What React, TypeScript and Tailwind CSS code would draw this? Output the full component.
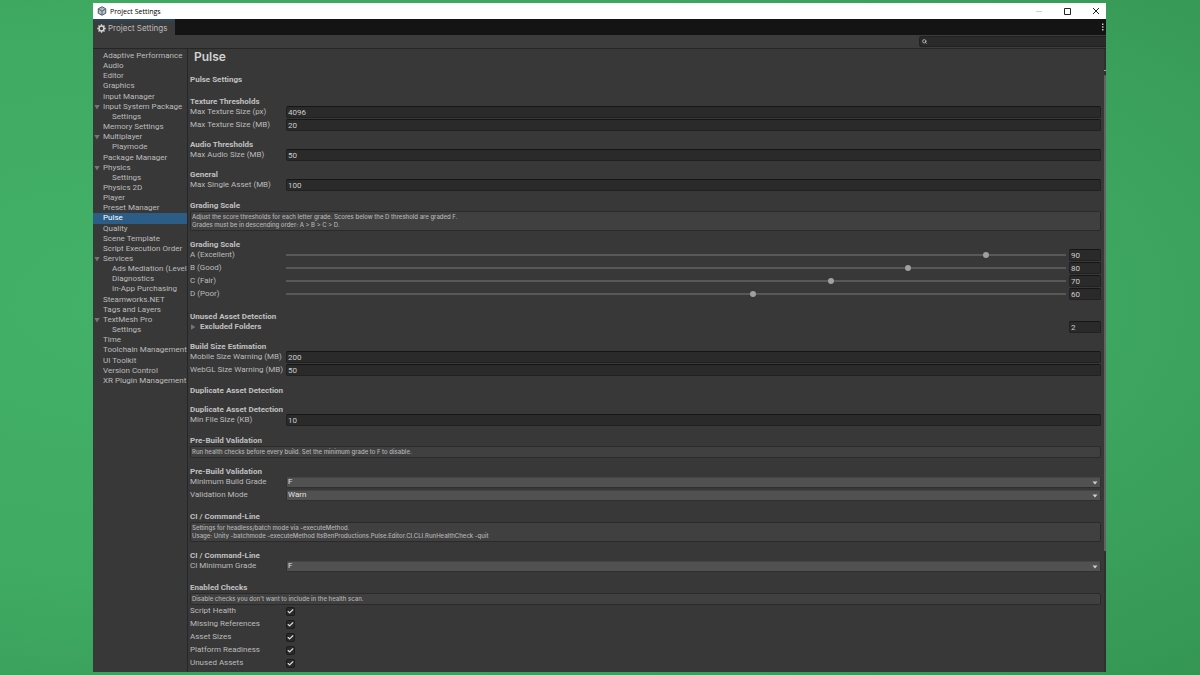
import React from 'react';
import { Check, Search } from 'lucide-react';

const categories = [
  { name: 'Adaptive Performance' },
  { name: 'Audio' },
  { name: 'Editor' },
  { name: 'Graphics' },
  { name: 'Input Manager' },
  { name: 'Input System Package', open: true },
  { name: 'Settings', child: true },
  { name: 'Memory Settings' },
  { name: 'Multiplayer', open: true },
  { name: 'Playmode', child: true },
  { name: 'Package Manager' },
  { name: 'Physics', open: true },
  { name: 'Settings', child: true },
  { name: 'Physics 2D' },
  { name: 'Player' },
  { name: 'Preset Manager' },
  { name: 'Pulse', selected: true },
  { name: 'Quality' },
  { name: 'Scene Template' },
  { name: 'Script Execution Order' },
  { name: 'Services', open: true },
  { name: 'Ads Mediation (LevelPlay)', child: true },
  { name: 'Diagnostics', child: true },
  { name: 'In-App Purchasing', child: true },
  { name: 'Steamworks.NET' },
  { name: 'Tags and Layers' },
  { name: 'TextMesh Pro', open: true },
  { name: 'Settings', child: true },
  { name: 'Time' },
  { name: 'Toolchain Management' },
  { name: 'UI Toolkit' },
  { name: 'Version Control' },
  { name: 'XR Plugin Management' },
];

const grades = [
  { label: 'A (Excellent)', value: 90 },
  { label: 'B (Good)', value: 80 },
  { label: 'C (Fair)', value: 70 },
  { label: 'D (Poor)', value: 60 },
];

const checks = [
  'Script Health',
  'Missing References',
  'Asset Sizes',
  'Platform Readiness',
  'Unused Assets',
  'Build Size Estimation',
];

const toId = (label: string) => label.toLowerCase().replace(/[^a-z0-9]+/g, '-');

const inputClass =
  'h-3 min-w-0 rounded-[2px] border border-[#212121] border-t-[#161616] bg-[#2a2a2a] px-px text-[8px] leading-none text-[#cccccc] outline-none';

const Heading = ({ children }: { children: React.ReactNode }) => (
  <h2 className="h-[11px] text-[8px] leading-[13px] font-bold whitespace-nowrap text-[#c0c0c0]">{children}</h2>
);

const HelpBox = ({ lines }: { lines: string[] }) => (
  <div className="mt-px rounded-[2px] border border-[#2a2a2a] bg-[#404040] px-px py-px font-['Inter',sans-serif] text-[6px] leading-[8px] font-medium text-[#b4b4b4]">
    {lines.map((line) => (
      <p key={line}>{line}</p>
    ))}
  </div>
);

const Row = ({ label, children }: { label: string; children: React.ReactNode }) => (
  <div className="flex h-3 items-center">
    <label htmlFor={toId(label)} className="w-24 shrink-0 text-[8px] leading-3 whitespace-nowrap">
      {label}
    </label>
    {children}
  </div>
);

const NumberField = ({ label, value }: { label: string; value: number }) => (
  <Row label={label}>
    <input id={toId(label)} type="text" defaultValue={value} className={`${inputClass} flex-1`} />
  </Row>
);

const SliderField = ({ label, value }: { label: string; value: number }) => (
  <Row label={label}>
    <input
      id={toId(label)}
      type="range"
      min={0}
      max={100}
      defaultValue={value}
      className="h-3 min-w-0 flex-1 appearance-none bg-transparent [&::-webkit-slider-runnable-track]:h-[2px] [&::-webkit-slider-runnable-track]:bg-[#585858] [&::-webkit-slider-thumb]:-mt-[2px] [&::-webkit-slider-thumb]:size-[6px] [&::-webkit-slider-thumb]:appearance-none [&::-webkit-slider-thumb]:rounded-full [&::-webkit-slider-thumb]:bg-[#a0a0a0]"
    />
    <input type="text" aria-label={`${label} value`} defaultValue={value} className={`${inputClass} ml-[3px] w-8`} />
  </Row>
);

const SelectField = ({ label, value, options }: { label: string; value: string; options: string[] }) => (
  <Row label={label}>
    <div className="relative h-[11px] flex-1">
      <select
        id={toId(label)}
        defaultValue={value}
        className="block h-full w-full appearance-none rounded-[2px] border border-[#303030] border-t-[#454545] bg-[#515151] px-px text-[8px] leading-none text-[#e0e0e0] outline-none"
      >
        {options.map((option) => (
          <option key={option}>{option}</option>
        ))}
      </select>
      <svg viewBox="0 0 6 4" className="pointer-events-none absolute top-1 right-[3px] h-1 w-[6px] fill-[#d0d0d0]">
        <path d="M0.5 0.5h5L3 3.5z" />
      </svg>
    </div>
  </Row>
);

const UnityIcon = () => (
  <svg viewBox="0 0 20 20" className="size-[10px] fill-none stroke-[#4a5866]">
    <path d="M10 1.5l7.5 4v9l-7.500 4-7.500-4v-9z" fill="#b9c4cd" strokeWidth="2" strokeLinejoin="round" />
    <path d="M10 10.500v7M10 10.500L3.500 6.500M10 10.500l6.500-4" strokeWidth="1.800" />
    <path d="M10 5.500l-3 1.500 3 2 3-2z" fill="#ffffff" strokeWidth="1" />
  </svg>
);

const GearIcon = () => (
  <svg viewBox="0 0 16 16" className="mr-[2px] size-[9px] fill-none stroke-[#d6d6d6]">
    <circle cx="8" cy="8" r="4.300" strokeWidth="2.600" />
    <path
      d="M8 0.500v3M8 12.500v3M0.500 8h3M12.500 8h3M2.700 2.700l2.100 2.100M11.200 11.200l2.100 2.100M13.300 2.700l-2.100 2.100M4.800 11.200l-2.100 2.100"
      strokeWidth="2.400"
    />
  </svg>
);

const TitleBar = () => (
  <header className="flex h-4 shrink-0 items-center bg-white pr-[6px] pl-1 text-black">
    <UnityIcon />
    <span className="ml-[3px] flex-1 font-['Open_Sans',sans-serif] text-[7px] leading-[13px] font-medium">
      Project Settings
    </span>
    <button aria-label="Minimize" className="flex w-7 justify-center">
      <svg viewBox="0 0 8 8" className="size-2 stroke-[#d0d0d0]">
        <path d="M1 4.500h6" />
      </svg>
    </button>
    <button aria-label="Maximize" className="flex w-7 justify-center">
      <svg viewBox="0 0 8 8" className="size-2 fill-none stroke-[#222222]">
        <path d="M1.500 1.500h6v6h-6z" />
      </svg>
    </button>
    <button aria-label="Close" className="ml-[11px] flex justify-center">
      <svg viewBox="0 0 8 8" className="size-2 fill-none stroke-[#222222]">
        <path d="M1 1l6 6M7 1l-6 6" />
      </svg>
    </button>
  </header>
);

const Sidebar = () => (
  <nav className="w-[95px] shrink-0 overflow-hidden border-r border-[#262626] pt-[2px]">
    <ul className="grid h-[335px] auto-rows-fr">
      {categories.map((item, index) => (
        <li key={index} className={item.selected ? 'flex bg-[#2c5d87] text-white' : 'flex'}>
          <span className={item.child ? 'flex w-[19px] shrink-0' : 'flex w-[10px] shrink-0 items-center pl-px'}>
            {item.open && (
              <svg viewBox="0 0 6 6" className="size-[6px] fill-[#757575]">
                <path d="M0.300 1h5.400L3 5.400z" />
              </svg>
            )}
          </span>
          <a href="#" className="text-[8px] leading-[10px] whitespace-nowrap">
            {item.name}
          </a>
        </li>
      ))}
    </ul>
  </nav>
);

const PulseSettings = () => (
  <main className="min-w-0 flex-1 overflow-hidden pr-[3px] pl-[2px]">
    <h1 className="h-4 pl-1 font-['Inter',sans-serif] text-[12px] leading-4 font-semibold text-[#d2d2d2]">Pulse</h1>

    <section className="mt-2">
      <Heading>Pulse Settings</Heading>
    </section>

    <section className="mt-[11px]">
      <Heading>Texture Thresholds</Heading>
      <div className="grid gap-px">
        <NumberField label="Max Texture Size (px)" value={4096} />
        <NumberField label="Max Texture Size (MB)" value={20} />
      </div>
    </section>

    <section className="mt-[7px]">
      <Heading>Audio Thresholds</Heading>
      <NumberField label="Max Audio Size (MB)" value={50} />
    </section>

    <section className="mt-[7px]">
      <Heading>General</Heading>
      <NumberField label="Max Single Asset (MB)" value={100} />
    </section>

    <section className="mt-2">
      <Heading>Grading Scale</Heading>
      <HelpBox
        lines={[
          'Adjust the score thresholds for each letter grade. Scores below the D threshold are graded F.',
          'Grades must be in descending order: A > B > C > D.',
        ]}
      />
    </section>

    <section className="mt-[7px]">
      <Heading>Grading Scale</Heading>
      <div className="grid gap-px">
        {grades.map((grade) => (
          <SliderField key={grade.label} label={grade.label} value={grade.value} />
        ))}
      </div>
    </section>

    <section className="mt-[10px]">
      <Heading>Unused Asset Detection</Heading>
      <div className="flex h-3 items-center justify-between">
        <button className="flex items-center text-[8px] leading-3 font-bold text-[#c0c0c0]">
          <svg viewBox="0 0 6 6" className="mr-1 size-[6px] fill-[#757575]">
            <path d="M1 0.300v5.400L5.400 3z" />
          </svg>
          Excluded Folders
        </button>
        <input type="text" aria-label="Excluded Folders count" defaultValue={2} className={`${inputClass} w-8`} />
      </div>
    </section>

    <section className="mt-[7px]">
      <Heading>Build Size Estimation</Heading>
      <div className="grid gap-px">
        <NumberField label="Mobile Size Warning (MB)" value={200} />
        <NumberField label="WebGL Size Warning (MB)" value={50} />
      </div>
    </section>

    <section className="mt-2">
      <Heading>Duplicate Asset Detection</Heading>
    </section>

    <section className="mt-2">
      <Heading>Duplicate Asset Detection</Heading>
      <NumberField label="Min File Size (KB)" value={10} />
    </section>

    <section className="mt-2">
      <Heading>Pre-Build Validation</Heading>
      <HelpBox lines={['Run health checks before every build. Set the minimum grade to F to disable.']} />
    </section>

    <section className="mt-[7px]">
      <Heading>Pre-Build Validation</Heading>
      <div className="grid gap-px">
        <SelectField label="Minimum Build Grade" value="F" options={['A', 'B', 'C', 'D', 'F']} />
        <SelectField label="Validation Mode" value="Warn" options={['Warn', 'Block']} />
      </div>
    </section>

    <section className="mt-[9px]">
      <Heading>CI / Command-Line</Heading>
      <HelpBox
        lines={[
          'Settings for headless/batch mode via -executeMethod.',
          'Usage: Unity -batchmode -executeMethod ItsBenProductions.Pulse.Editor.CI.CLI.RunHealthCheck -quit',
        ]}
      />
    </section>

    <section className="mt-[7px]">
      <Heading>CI / Command-Line</Heading>
      <SelectField label="CI Minimum Grade" value="F" options={['A', 'B', 'C', 'D', 'F']} />
    </section>

    <section className="mt-[9px]">
      <Heading>Enabled Checks</Heading>
      <HelpBox lines={["Disable checks you don't want to include in the health scan."]} />
      <div className="grid gap-px">
        {checks.map((check) => (
          <Row key={check} label={check}>
            <span className="relative flex size-[9px]">
              <input
                id={toId(check)}
                type="checkbox"
                defaultChecked
                className="peer size-[9px] appearance-none rounded-[2px] border border-[#1c1c1c] bg-[#2a2a2a]"
              />
              <Check
                strokeWidth={4}
                className="pointer-events-none absolute inset-px hidden size-[7px] text-[#e0e0e0] peer-checked:block"
              />
            </span>
          </Row>
        ))}
      </div>
    </section>
  </main>
);

const App = () => {
  return (
    <div className="flex h-screen flex-col bg-[radial-gradient(ellipse_at_20%_45%,#44b268_0%,#3faa62_55%,#359654_100%)] py-[3px] pr-[94px] pl-[93px] font-['Roboto',sans-serif]">
      <div className="flex min-h-0 flex-1 flex-col bg-[#383838] text-[#bcbcbc]">
        <TitleBar />

        <div className="flex h-4 shrink-0 items-center justify-between bg-[#141414]">
          <button className="flex h-4 w-[82px] items-center border-t-2 border-[#23466b] bg-[#3c3c3c] pl-1 font-['Inter',sans-serif] text-[8px] leading-none text-[#bdbdbd]">
            <GearIcon />
            Project Settings
          </button>
          <button aria-label="Window menu" className="pr-[2px]">
            <svg viewBox="0 0 2 8" className="h-2 w-[2px] fill-[#c4c4c4]">
              <path d="M0 0.500h1.500v1.500H0zM0 3.200h1.500v1.500H0zM0 6h1.500v1.500H0z" />
            </svg>
          </button>
        </div>

        <div className="flex h-[14px] shrink-0 items-center justify-end border-b border-[#262626] bg-[#3c3c3c]">
          <label className="flex h-[11px] w-[187px] items-center rounded-l-[3px] border border-r-0 border-[#212121] bg-[#2a2a2a] pl-[2px]">
            <Search strokeWidth={4} className="size-[5px] text-[#c4c4c4]" />
            <input type="search" aria-label="Search settings" className="min-w-0 flex-1 bg-transparent text-[8px] leading-none outline-none" />
          </label>
        </div>

        <div className="flex min-h-0 flex-1 overflow-hidden">
          <Sidebar />
          <PulseSettings />
          <div className="flex w-[2px] shrink-0 flex-col bg-[#303030] pt-[21px]">
            <div className="h-px bg-[#a0a0a0]" />
            <div className="mt-1 h-[79%] rounded-t-[2px] bg-[#626262]" />
          </div>
        </div>
      </div>
    </div>
  );
};

export default App;
